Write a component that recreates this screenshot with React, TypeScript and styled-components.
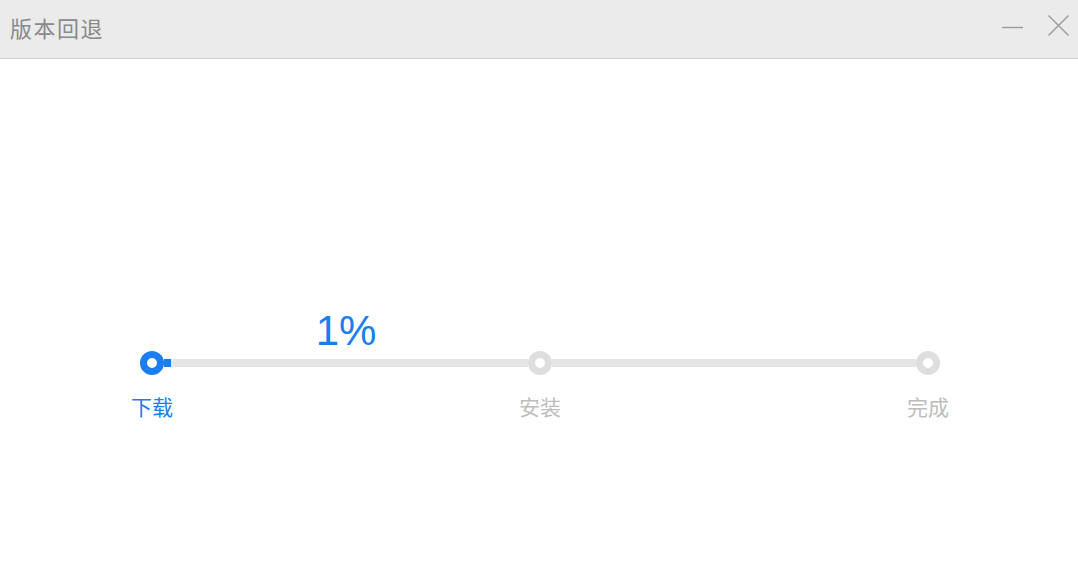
import styled, { createGlobalStyle } from 'styled-components'

type StepState = 'active' | 'todo'

type DotProps = {
  state: StepState
}

type LabelProps = {
  state: StepState
}

const BLUE = '#1a7ef0'

const GlobalStyle = createGlobalStyle`
  html, body {
    margin: 0;
    padding: 0;
    background: #fff;
  }

  body {
    font-family: 'Microsoft YaHei', 'Noto Sans CJK SC', 'Noto Sans', sans-serif;
  }
`

const Window = styled.div`
  width: 1078px;
  height: 582px;
  display: flex;
  flex-direction: column;
  background: #fff;
  overflow: hidden;
`

const TitleBar = styled.div`
  height: 59px;
  flex: none;
  display: flex;
  align-items: center;
  justify-content: space-between;
  padding: 0 9px 5px 10px;
  box-sizing: border-box;
  background: #ebebeb;
  border-bottom: 1px solid #d2d2d2;
`

const Title = styled.h1`
  margin: 0;
  font-size: 22px;
  font-weight: normal;
  line-height: 28px;
  color: #8a8a8a;
  letter-spacing: 1.5px;
`

const Controls = styled.div`
  display: flex;
  align-items: center;
  gap: 25px;
  margin-top: -2px;
`

const IconButton = styled.button`
  width: 21px;
  height: 21px;
  padding: 0;
  border: none;
  background: none;
  display: flex;
  cursor: pointer;
  color: #9a9a9a;
`

const Body = styled.main`
  flex: 1;
  padding: 252px 0 0 140px;
`

const Stepper = styled.div`
  width: 800px;
  display: grid;
  grid-template-columns: 24px 1fr 24px 1fr 24px;
  grid-template-rows: 40px 24px auto;
`

const Percent = styled.div`
  grid-column: 2;
  grid-row: 1;
  justify-self: center;
  font-family: 'Liberation Sans', Arial, sans-serif;
  font-size: 42px;
  line-height: 40px;
  color: ${BLUE};
`

const Dot = styled.div<DotProps>`
  grid-row: 2;
  width: 24px;
  height: 24px;
  box-sizing: border-box;
  border-radius: 50%;
  border: ${p => (p.state === 'active' ? `7px solid ${BLUE}` : '7px solid #dedede')};
  background: #fff;
`

const Segment = styled.div`
  grid-row: 2;
  align-self: center;
  height: 8px;
  background: #e6e6e6;
`

const Fill = styled.div`
  height: 100%;
  background: ${BLUE};
`

const Label = styled.div<LabelProps>`
  grid-row: 3;
  display: flex;
  justify-content: center;
  white-space: nowrap;
  margin-top: 17px;
  font-size: 21px;
  line-height: 28px;
  color: ${p => (p.state === 'active' ? BLUE : '#bdbdbd')};
`

const steps: { title: string, state: StepState }[] = [
  { title: '下载', state: 'active' },
  { title: '安装', state: 'todo' },
  { title: '完成', state: 'todo' },
]

export default function App () {
  const progress = 1

  return (
    <>
      <GlobalStyle />
      <Window>
        <TitleBar>
          <Title>版本回退</Title>
          <Controls>
            <IconButton aria-label="最小化">
              <svg width="21" height="21" viewBox="0 0 21 21">
                <line x1="0" y1="12.5" x2="21" y2="12.5" stroke="currentColor" strokeWidth="1.4" />
              </svg>
            </IconButton>
            <IconButton aria-label="关闭">
              <svg width="21" height="21" viewBox="0 0 21 21">
                <path d="M0.5 0.5 L20.5 20.5 M20.5 0.5 L0.5 20.5" stroke="currentColor" strokeWidth="1.4" fill="none" />
              </svg>
            </IconButton>
          </Controls>
        </TitleBar>

        <Body>
          <Stepper>
            <Percent>{progress}%</Percent>

            <Dot state={steps[0].state} />
            <Segment>
              <Fill style={{ width: `calc(${progress}% + 3px)` }} />
            </Segment>
            <Dot state={steps[1].state} />
            <Segment />
            <Dot state={steps[2].state} />

            {steps.map((step, i) => (
              <Label key={step.title} state={step.state} style={{ gridColumn: i * 2 + 1 }}>
                {step.title}
              </Label>
            ))}
          </Stepper>
        </Body>
      </Window>
    </>
  )
}
